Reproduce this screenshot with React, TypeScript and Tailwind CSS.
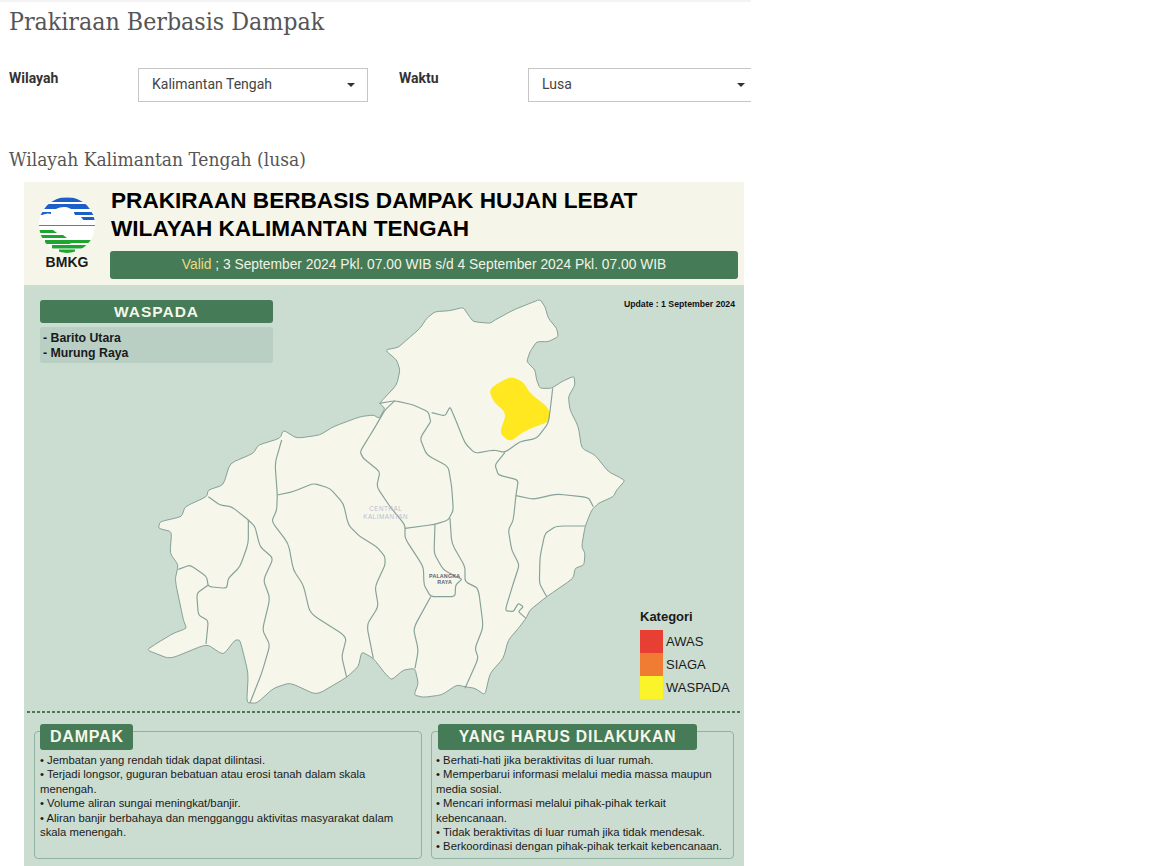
import React from 'react';

type Pt = [number, number];

// round the corners of a point list a little, coordinates are in 3x map space
function smooth(pts: Pt[], closed = false, t = 0.22) {
  const lerp = (a: Pt, b: Pt, k: number): Pt => [a[0] + (b[0] - a[0]) * k, a[1] + (b[1] - a[1]) * k];
  const n = pts.length;
  let d = '';
  if (closed) {
    pts.forEach((p, i) => {
      const a = lerp(p, pts[(i - 1 + n) % n], t);
      const b = lerp(p, pts[(i + 1) % n], t);
      d += `${i === 0 ? 'M' : 'L'}${a[0]} ${a[1]} Q${p[0]} ${p[1]} ${b[0]} ${b[1]} `;
    });
    return d + 'Z';
  }
  d = `M${pts[0][0]} ${pts[0][1]} `;
  for (let i = 1; i < n - 1; i++) {
    const a = lerp(pts[i], pts[i - 1], t);
    const b = lerp(pts[i], pts[i + 1], t);
    d += `L${a[0]} ${a[1]} Q${pts[i][0]} ${pts[i][1]} ${b[0]} ${b[1]} `;
  }
  return d + `L${pts[n - 1][0]} ${pts[n - 1][1]}`;
}

const outline: Pt[] = [
  [735, 180], [775, 172], [800, 150], [840, 115], [860, 85], [885, 65], [930, 62], [970, 52], [985, 75], [1000, 95],
  [1050, 100], [1065, 90], [1120, 60], [1165, 42], [1200, 28], [1215, 50], [1225, 85], [1250, 115], [1255, 140], [1225, 155],
  [1190, 155], [1170, 185], [1160, 215], [1185, 240], [1190, 270], [1200, 295], [1235, 295], [1265, 275], [1302, 258], [1305, 285],
  [1285, 320], [1290, 360], [1315, 410], [1325, 475], [1365, 495], [1405, 545], [1435, 560], [1455, 572], [1430, 600], [1420, 620],
  [1375, 640], [1355, 660], [1335, 710], [1325, 770], [1335, 790], [1332, 825], [1305, 835], [1300, 865], [1220, 920], [1170, 960],
  [1158, 985], [1135, 1015], [1105, 1050], [1090, 1105], [1050, 1150], [1035, 1215], [1005, 1195], [975, 1190], [950, 1185], [905, 1215],
  [850, 1222], [822, 1215], [835, 1180], [825, 1135], [790, 1140], [755, 1170], [735, 1150], [700, 1105], [665, 1085], [655, 1130],
  [620, 1162], [530, 1215], [450, 1178], [400, 1195], [350, 1240], [320, 1238], [325, 1150], [300, 1050], [285, 1050], [250, 1095],
  [200, 1062], [90, 1107], [20, 1080], [50, 1060], [100, 1030], [140, 1015], [130, 990], [105, 870], [115, 825], [90, 790],
  [95, 725], [55, 715], [60, 695], [125, 680], [135, 650], [200, 620], [205, 600], [250, 585], [270, 520], [340, 490],
  [355, 465], [420, 445], [430, 420], [470, 445], [540, 435], [580, 410], [660, 380], [700, 375], [718, 385], [735, 355],
  [718, 340], [770, 285], [780, 240], [770, 210],
];

const borders: Pt[][] = [
  [[718, 340], [765, 332], [820, 345], [865, 365], [872, 395]],
  [[875, 368], [915, 378], [930, 350], [945, 385], [975, 460], [1005, 490], [1060, 480], [1095, 487], [1140, 455], [1190, 445], [1225, 400], [1233, 340], [1238, 295]],
  [[1095, 487], [1065, 525], [1075, 555], [1135, 570], [1128, 615], [1120, 690], [1105, 720], [1115, 780], [1138, 825], [1120, 880], [1095, 962], [1120, 965], [1135, 940], [1150, 950], [1135, 965], [1158, 985]],
  [[1128, 617], [1180, 628], [1250, 612], [1345, 622], [1360, 650]],
  [[1335, 708], [1250, 708], [1215, 730], [1200, 800], [1198, 880], [1220, 920]],
  [[765, 332], [735, 360], [700, 420], [660, 485], [670, 505], [720, 545], [710, 590], [750, 650], [795, 705], [795, 745], [850, 830], [852, 885], [872, 920], [945, 920], [947, 885], [965, 868]],
  [[872, 395], [840, 445], [860, 495], [925, 530], [935, 590], [940, 660], [925, 690], [885, 703], [795, 715]],
  [[885, 703], [882, 790], [910, 840], [965, 868]],
  [[930, 685], [935, 760], [975, 830], [975, 875], [1015, 895], [1030, 1010], [1005, 1075], [1015, 1105], [975, 1195]],
  [[872, 920], [820, 1015], [835, 1080], [825, 1135]],
  [[425, 450], [405, 520], [412, 615], [410, 660], [395, 695], [445, 760], [460, 840], [490, 885], [510, 970], [620, 1040], [605, 1100], [620, 1162]],
  [[412, 615], [460, 605], [520, 580], [570, 595], [610, 640], [625, 705], [660, 740], [710, 770], [735, 800], [735, 825], [705, 890], [715, 950], [680, 1005], [700, 1105]],
  [[205, 620], [240, 645], [275, 650], [325, 690], [345, 710], [360, 770], [400, 805], [370, 870], [390, 925], [367, 1020], [390, 1065], [365, 1150], [330, 1238]],
  [[325, 690], [325, 760], [300, 830], [265, 865], [260, 895], [205, 890], [200, 860], [150, 825], [115, 838]],
  [[205, 885], [170, 910], [175, 975], [205, 992], [198, 1062]],
];

const blob: Pt[] = [
  [1047, 300], [1080, 275], [1115, 260], [1150, 275], [1170, 310], [1228, 355], [1228, 395], [1190, 408], [1150, 425], [1110, 456], [1078, 430], [1100, 370], [1060, 335],
];

function BmkgLogo() {
  return (
    <svg width="56" height="56" viewBox="0 0 56 56">
      <defs>
        <clipPath id="disc">
          <circle cx="28" cy="28" r="28" />
        </clipPath>
      </defs>
      <g clipPath="url(#disc)">
        <rect width="56" height="56" fill="#fff" />
        <rect x="0" y="0.5" width="56" height="4.5" fill="#1c5fc9" />
        <rect x="0" y="7" width="56" height="5" fill="#1c5fc9" />
        <rect x="0" y="15" width="12" height="3" fill="#1c5fc9" />
        <rect x="32" y="15" width="24" height="3" fill="#1c5fc9" />
        <rect x="42" y="20" width="14" height="3" fill="#1c5fc9" />
        <path d="M0 20 Q6 15 12 17 Q17 9 27 10 Q34 11 36 18 Q42 18 45 24 H56 V28 H0 Z" fill="#fff" />
        <rect x="0" y="28" width="56" height="1" fill="#777" />
        <path d="M0 33 H14 L18 36 H0 Z" fill="#1ea52f" />
        <path d="M0 38 H24 L28 41 H0 Z" fill="#1ea52f" />
        <path d="M6 43 H56 V46 H30 L33 47 H56 V47 H6 Z" fill="#1ea52f" />
        <rect x="13" y="48" width="36" height="3.5" fill="#1ea52f" />
        <rect x="20" y="52.5" width="16" height="3.5" fill="#1ea52f" />
      </g>
    </svg>
  );
}

function Select({ value }: { value: string }) {
  return (
    <div className="flex h-[34px] w-[230px] shrink-0 items-center justify-between border border-[#c5c5c5] bg-white pb-[1px] pl-[13px] pr-[12px] text-[14px] text-[#444]">
      <span>{value}</span>
      <span className="h-0 w-0 border-x-[4px] border-t-[4px] border-x-transparent border-t-[#333]" />
    </div>
  );
}

export default function App() {
  return (
    <div className="h-[866px] overflow-hidden bg-white font-['Roboto',sans-serif]">
      <div className="h-[866px] w-[751px] overflow-hidden">
        <div className="h-[2px] bg-[#f3f3f3]" />
        <h1 className="mt-[6px] pl-[9px] font-['DejaVu_Serif',serif] text-[24.7px] leading-[28px] text-[#555] [font-stretch:condensed]">
          Prakiraan Berbasis Dampak
        </h1>
        <div className="mt-[32px] flex pl-[9px]">
          <label className="w-[129px] shrink-0 pt-[1px] text-[14px] font-bold leading-[18px] text-[#333]">Wilayah</label>
          <Select value="Kalimantan Tengah" />
          <label className="ml-[31px] w-[129px] shrink-0 pt-[1px] text-[14px] font-bold leading-[18px] text-[#333]">Waktu</label>
          <Select value="Lusa" />
        </div>
        <h2 className="mt-[46px] pl-[9px] font-['DejaVu_Serif',serif] text-[19px] leading-[22px] text-[#555] [font-stretch:condensed]">
          Wilayah Kalimantan Tengah (lusa)
        </h2>

        <div className="ml-[24px] mt-[12px] w-[720px] font-['Liberation_Sans',sans-serif]">
          <div className="flex h-[103px] bg-[#f5f6e9]">
            <div className="ml-[15px] flex w-[56px] flex-col items-center pt-[15px]">
              <BmkgLogo />
              <div className="mt-[1px] text-[14px] font-bold leading-[16px] text-[#1a1a1a]">BMKG</div>
            </div>
            <div className="ml-[15px] w-[628px]">
              <div className="pl-[1px] pt-[5px] text-[22.6px] font-bold leading-[28px] text-black">
                PRAKIRAAN BERBASIS DAMPAK HUJAN LEBAT
                <br />
                WILAYAH KALIMANTAN TENGAH
              </div>
              <div className="mt-[8px] h-[28px] rounded-[3px] bg-[#467b57] text-center text-[13.8px] leading-[28px] text-[#f2f3e6]">
                <span className="text-[#ecd97f]">Valid</span> ; 3 September 2024 Pkl. 07.00 WIB s/d 4 September 2024 Pkl. 07.00 WIB
              </div>
            </div>
          </div>

          <div className="bg-[#cbdcd1]">
            <div className="relative h-[426px]">
              <svg className="absolute left-[116px] top-[5px]" width="500" height="420" viewBox="0 0 1500 1260">
                <path d={smooth(outline, true)} fill="#f6f7ea" stroke="#86a19a" strokeWidth="3" strokeLinejoin="round" />
                <path d={smooth(blob, true, 0.35)} fill="#ffe81f" />
                {borders.map((b, i) => (
                  <path key={i} d={smooth(b)} fill="none" stroke="#86a19a" strokeWidth="3.5" strokeLinejoin="round" />
                ))}
                <g fontFamily="'Liberation Sans', sans-serif" textAnchor="middle">
                  <text x="737" y="662" fontSize="19" letterSpacing="1.5" fill="#b9bed2">CENTRAL</text>
                  <text x="737" y="686" fontSize="19" letterSpacing="1.5" fill="#b9bed2">KALIMANTAN</text>
                  <text x="914" y="863" fontSize="16" fontWeight="bold" letterSpacing="0.5" fill="#5d617a">PALANGKA</text>
                  <text x="914" y="881" fontSize="16" fontWeight="bold" letterSpacing="0.5" fill="#5d617a">RAYA</text>
                </g>
              </svg>
              <div className="absolute left-[16px] top-[15px] w-[233px]">
                <div className="h-[23px] rounded-[3px] bg-[#467b57] text-center text-[15.5px] font-bold leading-[23px] tracking-[1px] text-[#f5f6e9]">
                  WASPADA
                </div>
                <div className="mt-[4px] h-[36px] rounded-[3px] bg-[#b9cfc4] pl-[3px] pt-[4px] text-[12.3px] font-bold leading-[15px] text-[#1a1a1a]">
                  <div>- Barito Utara</div>
                  <div>- Murung Raya</div>
                </div>
              </div>
              <div className="absolute right-[9px] top-[13px] text-[8.7px] font-bold leading-[12px] text-[#111]">
                Update : 1 September 2024
              </div>
              <div className="absolute left-[616px] top-[323px]">
                <div className="text-[13px] font-bold leading-[18px] text-[#1a1a1a]">Kategori</div>
                <div className="mt-[4px] flex flex-col">
                  {[
                    { name: 'AWAS', color: 'bg-[#e73f33]' },
                    { name: 'SIAGA', color: 'bg-[#f07c33]' },
                    { name: 'WASPADA', color: 'bg-[#fcf42b]' },
                  ].map((k) => (
                    <div key={k.name} className="flex h-[23px] items-center gap-[3px]">
                      <span className={`h-[23px] w-[23px] ${k.color}`} />
                      <span className="text-[13px] text-[#1a1a1a]">{k.name}</span>
                    </div>
                  ))}
                </div>
              </div>
            </div>

            <div className="mx-[3px] h-[2px] bg-[repeating-linear-gradient(90deg,#467b57_0_3px,transparent_3px_5px)]" />

            <div className="flex h-[160px] pl-[10px] pt-[18px]">
              <div className="relative h-[128px] w-[388px] rounded-[4px] border border-[#8fb3a0] pl-[5px] pr-[20px] pt-[21px] text-[11.3px] leading-[14.4px] text-[#1a1a1a]">
                <div className="absolute left-[5px] top-[-8px] h-[26px] w-[93px] rounded-[3px] bg-[#467b57] pl-[10px] text-[16px] font-bold leading-[25px] tracking-[0.8px] text-[#f5f6e9]">
                  DAMPAK
                </div>
                <div>• Jembatan yang rendah tidak dapat dilintasi.</div>
                <div>• Terjadi longsor, guguran bebatuan atau erosi tanah dalam skala menengah.</div>
                <div>• Volume aliran sungai meningkat/banjir.</div>
                <div>• Aliran banjir berbahaya dan mengganggu aktivitas masyarakat dalam skala menengah.</div>
              </div>
              <div className="relative ml-[9px] h-[128px] w-[303px] rounded-[4px] border border-[#8fb3a0] pl-[4px] pr-[6px] pt-[21px] text-[11.3px] leading-[14.4px] text-[#1a1a1a]">
                <div className="absolute left-[6px] top-[-8px] h-[26px] w-[259px] rounded-[3px] bg-[#467b57] text-center text-[15.7px] font-bold leading-[25px] tracking-[0.8px] text-[#f5f6e9]">
                  YANG HARUS DILAKUKAN
                </div>
                <div>• Berhati-hati jika beraktivitas di luar rumah.</div>
                <div>• Memperbarui informasi melalui media massa maupun media sosial.</div>
                <div>• Mencari informasi melalui pihak-pihak terkait kebencanaan.</div>
                <div>• Tidak beraktivitas di luar rumah jika tidak mendesak.</div>
                <div>• Berkoordinasi dengan pihak-pihak terkait kebencanaan.</div>
              </div>
            </div>
          </div>
        </div>
      </div>
    </div>
  );
}
